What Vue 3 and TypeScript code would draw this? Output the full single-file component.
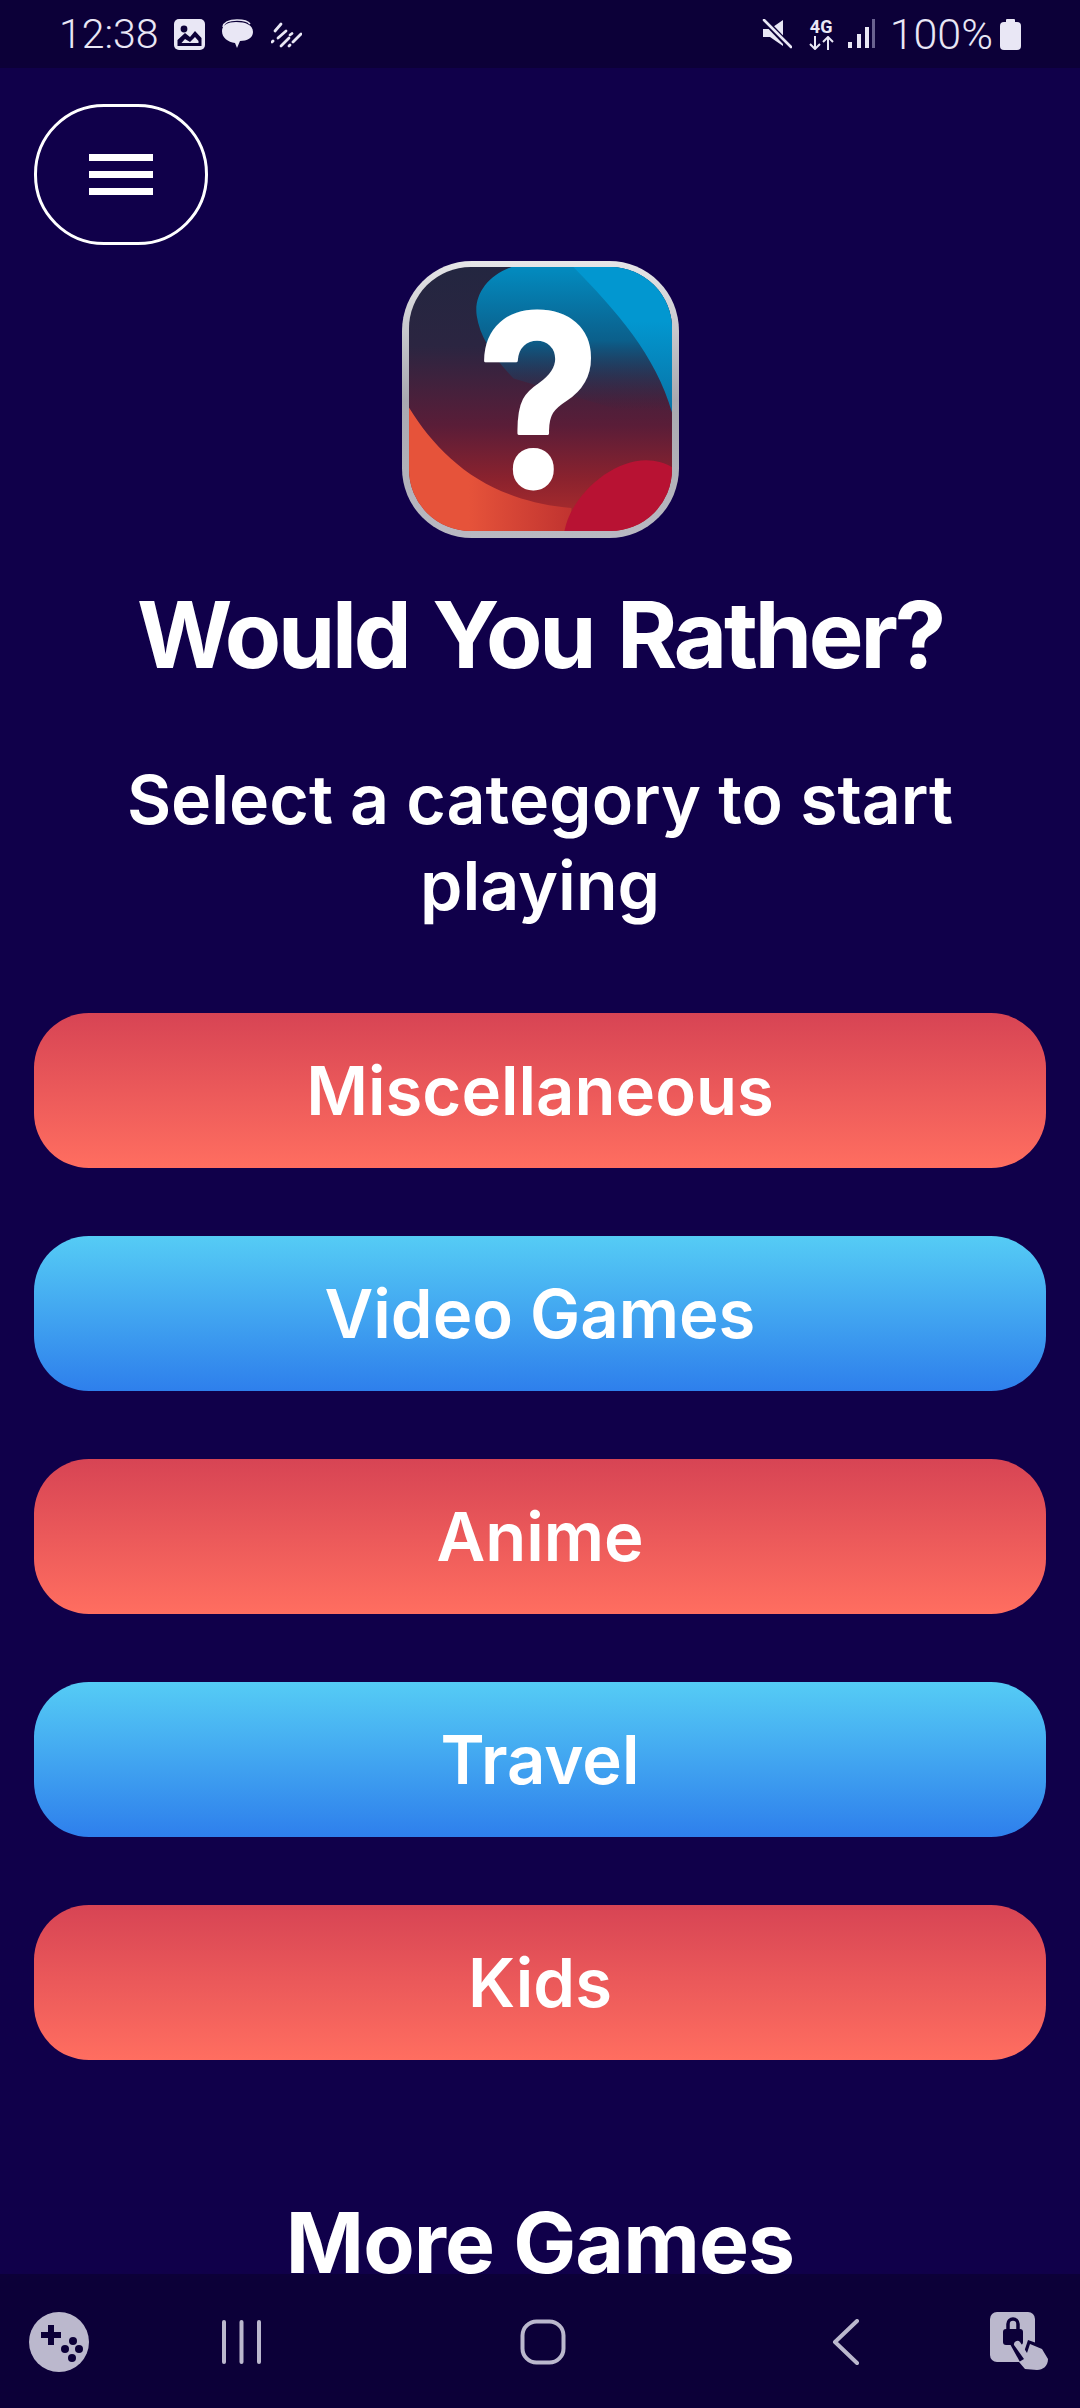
<script setup lang="ts">
interface Category {
  label: string;
  tone: 'red' | 'blue';
}

const categories: Category[] = [
  { label: 'Miscellaneous', tone: 'red' },
  { label: 'Video Games', tone: 'blue' },
  { label: 'Anime', tone: 'red' },
  { label: 'Travel', tone: 'blue' },
  { label: 'Kids', tone: 'red' },
];
</script>

<template>
  <div class="Screen">
    <header class="StatusBar">
      <div class="StatusBar-left">
        <span class="StatusBar-time">12:38</span>
        <svg class="StatusBar-gallery" width="31" height="31" viewBox="0 0 31 31">
          <rect width="31" height="31" rx="5" fill="#e9e7f5" />
          <circle cx="10" cy="10" r="3.4" fill="#0c0038" />
          <path d="M3.500 27 L3.500 21 L11 14 L16 18 L21 12 L27.500 19 L27.500 27 Z" fill="#0c0038" />
          <path d="M7.500 24 L11 20 L16 23 L21 18 L24.500 22 L24.500 24 Z" fill="#e9e7f5" />
        </svg>
        <svg class="StatusBar-chat" width="32" height="32" viewBox="0 0 32 32">
          <path d="M2 9 C3 4 8 2 16 2 C23 2 27 3 29 6" fill="none" stroke="#e9e7f5" stroke-width="1.500" />
          <path d="M15 4 C25 4 32 7 32 14 C32 20 26 23 19 23 L16 30 L14 25 C7 24 1 20 1 13 C1 7 7 4 15 4 Z" fill="#e9e7f5" />
        </svg>
        <svg class="StatusBar-dashes" width="31" height="32" viewBox="0 0 31 32" stroke="#e9e7f5" stroke-width="2.800" stroke-linecap="round">
          <path d="M4 13 L10 6" />
          <path d="M7 20 L15 13" />
          <path d="M1 24 L2 23" />
          <path d="M10 28 L18 20" />
          <path d="M22 24 L30 16" />
          <path d="M19 17 L21 15.500" />
          <path d="M18 28 L19 27" />
        </svg>
      </div>
      <div class="StatusBar-right">
        <svg class="StatusBar-mute" width="30" height="30" viewBox="0 0 30 30">
          <path d="M1 10 L8 10 L21 1 L21 27 L8 18 L1 18 Z" fill="#e9e7f5" />
          <path d="M3 2 L29 29" stroke="#0c0038" stroke-width="6" />
          <path d="M2 1 L29 28" stroke="#e9e7f5" stroke-width="2.600" stroke-linecap="round" />
        </svg>
        <div class="StatusBar-network">
          <span class="StatusBar-4g">4G</span>
          <svg width="25" height="14" viewBox="0 0 25 14" fill="none" stroke="#e9e7f5" stroke-width="2">
            <path d="M6 0 L6 13 M1 8 L6 13 L11 8" />
            <path d="M19 14 L19 1 M14 6 L19 1 L24 6" />
          </svg>
        </div>
        <svg class="StatusBar-signal" width="27" height="30" viewBox="0 0 27 30">
          <rect x="0" y="23" width="4" height="6" fill="#e9e7f5" />
          <rect x="9" y="15" width="4" height="14" fill="#e9e7f5" />
          <rect x="17" y="8" width="4" height="21" fill="#e9e7f5" />
          <rect x="24" y="0" width="3" height="29" fill="#6a6290" />
        </svg>
        <span class="StatusBar-battery">100%</span>
        <svg width="21" height="31" viewBox="0 0 21 31">
          <rect x="6" y="0" width="9" height="4" rx="1" fill="#e9e7f5" />
          <rect x="0" y="3" width="21" height="28" rx="4" fill="#e9e7f5" />
        </svg>
      </div>
    </header>

    <main class="Home">
      <button class="Home-menu" aria-label="Menu">
        <span></span>
        <span></span>
        <span></span>
      </button>

      <svg class="Home-logo" width="277" height="277" viewBox="0 0 278 278">
        <defs>
          <linearGradient id="rim" x1="0" y1="0" x2="0" y2="1">
            <stop offset="0" stop-color="#e6e6e8" />
            <stop offset="0.5" stop-color="#a9a9b0" />
            <stop offset="1" stop-color="#b9b9c2" />
          </linearGradient>
          <linearGradient id="base" x1="0" y1="0" x2="0" y2="1">
            <stop offset="0" stop-color="#232640" />
            <stop offset="0.3" stop-color="#2b2541" />
            <stop offset="0.6" stop-color="#5a1d38" />
            <stop offset="0.8" stop-color="#8a222e" />
            <stop offset="1" stop-color="#b52f2c" />
          </linearGradient>
          <linearGradient id="swoosh" gradientUnits="userSpaceOnUse" x1="0" y1="10" x2="0" y2="150">
            <stop offset="0" stop-color="#0389bd" />
            <stop offset="0.5" stop-color="#0b5f8b" />
            <stop offset="1" stop-color="#2b2541" stop-opacity="0" />
          </linearGradient>
          <linearGradient id="sky" gradientUnits="userSpaceOnUse" x1="0" y1="60" x2="0" y2="165">
            <stop offset="0" stop-color="#0297d0" />
            <stop offset="1" stop-color="#0a6d9f" />
          </linearGradient>
          <linearGradient id="ember" gradientUnits="userSpaceOnUse" x1="0" y1="0" x2="190" y2="0">
            <stop offset="0.35" stop-color="#e6533a" />
            <stop offset="1" stop-color="#b92d2e" />
          </linearGradient>
          <clipPath id="face">
            <rect x="7" y="6" width="264" height="265" rx="62" />
          </clipPath>
        </defs>
        <rect x="0" y="0" width="278" height="278" rx="70" fill="url(#rim)" />
        <g clip-path="url(#face)">
          <rect x="7" y="6" width="264" height="265" fill="url(#base)" />
          <path d="M110 6 C85 15 72 35 75 55 C78 75 90 95 112 118 L271 165 L271 6 Z" fill="url(#swoosh)" />
          <path d="M172 6 C215 50 255 95 271 152 L271 6 Z" fill="url(#sky)" />
          <path d="M7 147 C30 185 65 220 113 236 C130 242 150 246 170 248 L170 271 L7 271 Z" fill="url(#ember)" />
          <path d="M163 271 C170 235 210 200 245 200 C255 200 265 203 271 207 L271 271 Z" fill="#b81233" />
        </g>
        <text class="Home-logoMark" transform="translate(137 227) scale(0.92 1)">?</text>
      </svg>

      <h1 class="Home-title">Would You Rather?</h1>
      <p class="Home-subtitle">Select a category to start playing</p>

      <div class="Home-categories">
        <button
          v-for="category in categories"
          :key="category.label"
          class="Home-category"
          :class="`is-${category.tone}`"
        >
          {{ category.label }}
        </button>
      </div>

      <h2 class="Home-more">More Games</h2>
    </main>

    <nav class="NavBar">
      <svg width="62" height="60" viewBox="0 0 62 60">
        <ellipse cx="31" cy="30" rx="30" ry="30" fill="#bbb8cd" />
        <path d="M20 13 h6 v7 h7 v6 h-7 v7 h-6 v-7 h-7 v-6 h7 Z" fill="#0c0038" />
        <circle cx="45" cy="29" r="4" fill="#0c0038" />
        <circle cx="37" cy="37" r="4" fill="#0c0038" />
        <circle cx="51" cy="37" r="4" fill="#0c0038" />
        <circle cx="44" cy="46" r="4" fill="#0c0038" />
      </svg>
      <svg width="41" height="44" viewBox="0 0 41 44" stroke="#bbb8cd" stroke-width="4" stroke-linecap="round">
        <path d="M3 2 L3 42" />
        <path d="M20.500 2 L20.500 42" />
        <path d="M38 2 L38 42" />
      </svg>
      <svg width="46" height="46" viewBox="0 0 46 46">
        <rect x="2.500" y="2.500" width="41" height="41" rx="14" fill="none" stroke="#bbb8cd" stroke-width="4" />
      </svg>
      <svg width="28" height="46" viewBox="0 0 28 46" fill="none" stroke="#bbb8cd" stroke-width="4" stroke-linecap="round" stroke-linejoin="round">
        <path d="M25 2 L3 23 L25 44" />
      </svg>
      <svg class="NavBar-lock" width="60" height="60" viewBox="0 0 60 60">
        <rect x="0" y="0" width="45" height="50" rx="7" fill="#bbb8cd" />
        <path d="M18 18 V12 a5 5 0 0 1 10 0 V18" fill="none" stroke="#0c0038" stroke-width="3.500" />
        <rect x="13" y="17" width="20" height="16" rx="3" fill="#0c0038" />
        <path d="M20 32 L26 26 L34 40 L38 28 L52 33 L60 46 L55 60 L30 60 L24 51 L30 50 Z" fill="#0c0038" />
        <path d="M24 33 a3.500 3.500 0 0 1 6 -3 L37 41 L40 32 L52 37 L58 47 C58 54 53 58 47 58 L35 57 L29 50 L34 47 Z" fill="#bbb8cd" />
      </svg>
    </nav>
  </div>
</template>

<style>
html,
body {
  margin: 0;
  background: #10004a;
}
</style>

<style scoped>
.Screen {
  width: 1080px;
  height: 2408px;
  display: flex;
  flex-direction: column;
  overflow: hidden;
  background: #10004a;
  color: #fff;
  font-family: "Inter", "Liberation Sans", sans-serif;
}

.StatusBar {
  flex: 0 0 68px;
  display: flex;
  justify-content: space-between;
  align-items: center;
  padding: 0 59px 0 59px;
  background: #0c0038;
  color: #e9e7f5;
  font-family: "Roboto", sans-serif;
  font-size: 41px;
  font-weight: 300;
}

.StatusBar-left,
.StatusBar-right {
  display: flex;
  align-items: center;
}

.StatusBar-time {
  width: 115px;
}

.StatusBar-chat {
  margin-left: 16px;
}

.StatusBar-dashes {
  margin-left: 18px;
}

.StatusBar-network {
  display: flex;
  flex-direction: column;
  align-items: center;
  margin-left: 17px;
  line-height: 1;
}

.StatusBar-4g {
  font-size: 18px;
  font-weight: 700;
  height: 18px;
}

.StatusBar-signal {
  margin-left: 14px;
}

.StatusBar-battery {
  margin: 0 7px 0 15px;
  font-size: 43px;
}

.Home {
  flex: 1;
  min-height: 0;
  display: flex;
  flex-direction: column;
  align-items: center;
  padding: 36px 34px 0;
}

.Home > * {
  flex-shrink: 0;
}

.Home-menu {
  align-self: flex-start;
  width: 174px;
  height: 141px;
  padding: 0;
  display: flex;
  flex-direction: column;
  justify-content: center;
  align-items: center;
  gap: 10px;
  border: 3px solid #fff;
  border-radius: 70px;
  background: none;
}

.Home-menu span {
  width: 64px;
  height: 7px;
  background: #fff;
}

.Home-logo {
  margin-top: 16px;
  overflow: visible;
}

.Home-logoMark {
  font-family: "Inter", sans-serif;
  font-size: 240px;
  font-weight: 700;
  text-anchor: middle;
  fill: #fff;
  stroke: #fff;
  stroke-width: 3px;
  stroke-linejoin: round;
}

.Home-title {
  margin: 42px 0 0;
  font-size: 92px;
  line-height: 110px;
  font-weight: 700;
  letter-spacing: -3.200px;
  word-spacing: 5px;
  text-align: center;
}

.Home-subtitle {
  margin: 66px 0 0;
  width: 960px;
  font-size: 68px;
  line-height: 86px;
  font-weight: 600;
  text-align: center;
}

.Home-categories {
  align-self: stretch;
  display: flex;
  flex-direction: column;
  gap: 68px;
  margin-top: 85px;
}

.Home-category {
  flex-shrink: 0;
  height: 155px;
  padding: 0;
  border: none;
  border-radius: 55px;
  color: #fff;
  font-family: inherit;
  font-size: 67px;
  font-weight: 600;
}

.Home-category.is-red {
  background: linear-gradient(#d74454, #ff6e60);
}

.Home-category.is-blue {
  background: linear-gradient(#55ccf5, #2e7fec);
}

.Home-more {
  margin: 149px 0 0;
  font-size: 84px;
  line-height: 68px;
  font-weight: 700;
  letter-spacing: -0.900px;
}

.NavBar {
  flex: 0 0 134px;
  display: grid;
  grid-template-columns: 118px 246px 358px 248px 100px;
  align-items: center;
  justify-items: center;
  padding-top: 2px;
  box-sizing: border-box;
  background: #0c0038;
}
</style>
